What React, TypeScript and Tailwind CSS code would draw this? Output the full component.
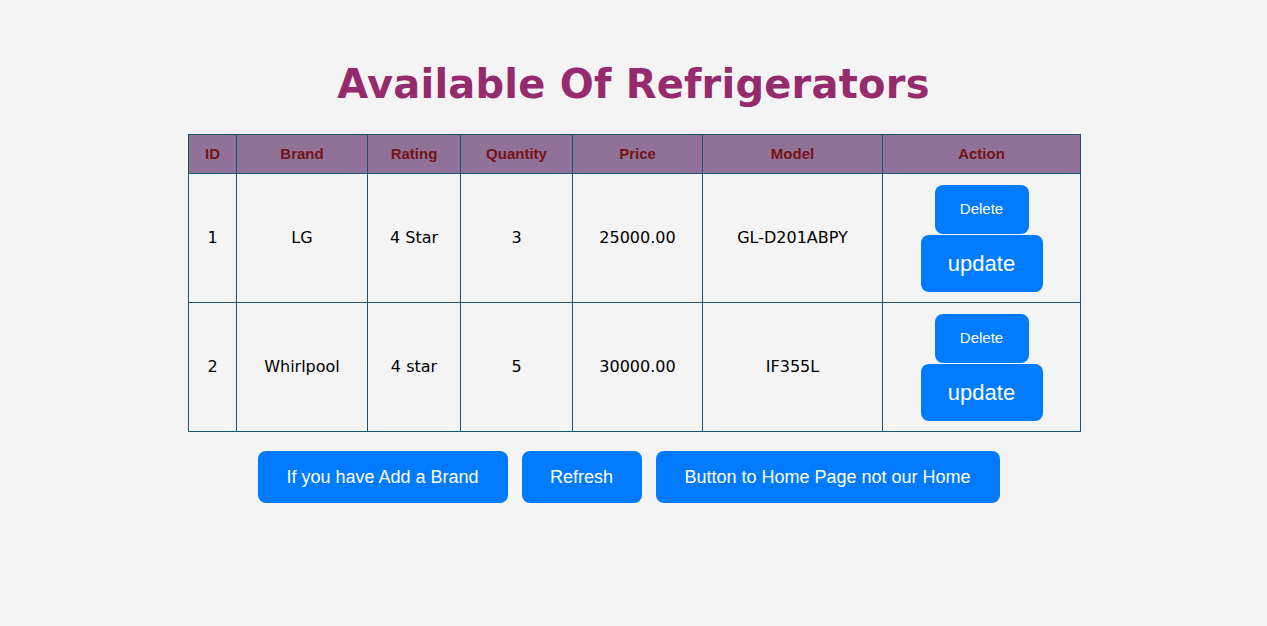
import React from "react";

type Fridge = {
  id: number;
  brand: string;
  rating: string;
  quantity: number;
  price: string;
  model: string;
};

const fridges: Fridge[] = [
  { id: 1, brand: "LG", rating: "4 Star", quantity: 3, price: "25000.00", model: "GL-D201ABPY" },
  { id: 2, brand: "Whirlpool", rating: "4 star", quantity: 5, price: "30000.00", model: "IF355L" },
];

const headers = [
  { label: "ID", w: "w-[48px]" },
  { label: "Brand", w: "w-[131px]" },
  { label: "Rating", w: "w-[93px]" },
  { label: "Quantity", w: "w-[112px]" },
  { label: "Price", w: "w-[130px]" },
  { label: "Model", w: "w-[180px]" },
  { label: "Action", w: "w-[198px]" },
];

const cell = "border border-[#1d5670] text-center align-middle";

export default function App() {
  return (
    <div className="min-h-[626px] bg-[#f4f4f4] flex flex-col items-center pt-[52px] font-['DejaVu_Sans',sans-serif]">
      <h1 className="text-[40px] leading-[64px] font-bold text-[#962a6e] font-['Comic_Sans_MS','DejaVu_Sans',cursive] tracking-[0.2px]">
        Available Of Refrigerators
      </h1>

      <table className="mt-[18px] ml-[2px] border-collapse w-[893px] table-fixed">
        <thead>
          <tr className="bg-[#907299] h-[39px]">
            {headers.map((h) => (
              <th
                key={h.label}
                className={`${cell} ${h.w} text-[15px] font-bold text-[#741417] font-['Liberation_Sans',sans-serif]`}
              >
                {h.label}
              </th>
            ))}
          </tr>
        </thead>
        <tbody>
          {fridges.map((f) => (
            <tr key={f.id} className="h-[129px] text-[16px] text-black">
              <td className={cell}>{f.id}</td>
              <td className={cell}>{f.brand}</td>
              <td className={cell}>{f.rating}</td>
              <td className={cell}>{f.quantity}</td>
              <td className={cell}>{f.price}</td>
              <td className={cell}>{f.model}</td>
              <td className={cell}>
                <div className="flex flex-col items-center font-['Liberation_Sans',sans-serif] text-white">
                  <button className="w-[94px] h-[49px] rounded-[8px] bg-[#007bff] text-[15px]">
                    Delete
                  </button>
                  <button className="w-[122px] h-[57px] mt-[1px] rounded-[8px] bg-[#007bff] text-[22px]">
                    update
                  </button>
                </div>
              </td>
            </tr>
          ))}
        </tbody>
      </table>

      <div className="mt-[19px] mr-[10px] flex gap-[14px] font-['Liberation_Sans',sans-serif] text-white text-[18px]">
        <button className="w-[250px] h-[52px] rounded-[8px] bg-[#007bff]">If you have Add a Brand</button>
        <button className="w-[120px] h-[52px] rounded-[8px] bg-[#007bff]">Refresh</button>
        <button className="w-[344px] h-[52px] rounded-[8px] bg-[#007bff]">Button to Home Page not our Home</button>
      </div>
    </div>
  );
}
